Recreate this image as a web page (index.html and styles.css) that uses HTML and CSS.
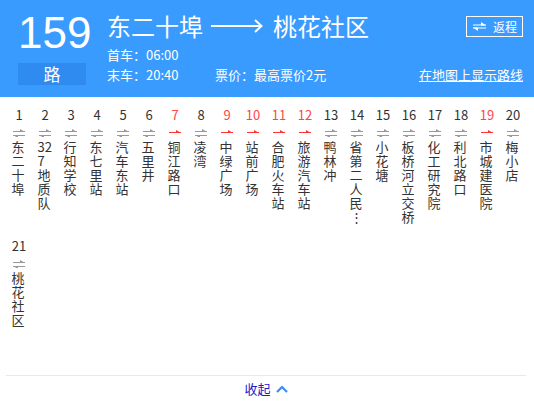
FILE: index.html
```html
<!DOCTYPE html>
<html lang="zh">
<head>
<meta charset="utf-8">
<link rel="stylesheet" href="styles.css">
</head>
<body>
<div class="header">
  <div class="route-no">
    <div class="num">159</div>
    <div class="lu">路</div>
  </div>
  <div class="info">
    <div class="title-row">
      <span class="title">东二十埠</span>
      <svg class="big-arrow" width="52" height="14" viewBox="0 0 52 14"><path d="M0 7H50M44 1L50.5 7L44 13" fill="none" stroke="#fff" stroke-width="2"/></svg>
      <span class="title">桃花社区</span>
      <div class="return-btn">
        <svg width="13" height="9" viewBox="0 0 13 9"><path d="M0 3H13M0 6H13" stroke="#fff" stroke-width="1"/><polygon points="8,0 13,3.5 8,3.5" fill="#fff"/><polygon points="0,5.5 5,5.5 5,9" fill="#fff"/></svg>
        <span>返程</span>
      </div>
    </div>
    <div class="line">首车<span class="colon">：</span>06:00</div>
    <div class="line line-row">
      <span class="last">末车<span class="colon">：</span>20:40</span>
      <span>票价<span class="colon">：</span>最高票价2元</span>
      <span class="map-link">在地图上显示路线</span>
    </div>
  </div>
</div>

<div class="stations">
  <div class="st"><div class="no">1</div><svg class="ic" width="12" height="8" viewBox="0 0 12 8"><path d="M0 2.5H12M0 6.5H12" stroke="#999"/><polygon points="7,0 12,3 7,3" fill="#999"/><polygon points="0,6 5,6 5,9" fill="#999"/></svg><div class="name">东二十埠</div></div>
  <div class="st"><div class="no">2</div><svg class="ic" width="12" height="8" viewBox="0 0 12 8"><path d="M0 2.5H12M0 6.5H12" stroke="#999"/><polygon points="7,0 12,3 7,3" fill="#999"/><polygon points="0,6 5,6 5,9" fill="#999"/></svg><div class="name">327地质队</div></div>
  <div class="st"><div class="no">3</div><svg class="ic" width="12" height="8" viewBox="0 0 12 8"><path d="M0 2.5H12M0 6.5H12" stroke="#999"/><polygon points="7,0 12,3 7,3" fill="#999"/><polygon points="0,6 5,6 5,9" fill="#999"/></svg><div class="name">行知学校</div></div>
  <div class="st"><div class="no">4</div><svg class="ic" width="12" height="8" viewBox="0 0 12 8"><path d="M0 2.5H12M0 6.5H12" stroke="#999"/><polygon points="7,0 12,3 7,3" fill="#999"/><polygon points="0,6 5,6 5,9" fill="#999"/></svg><div class="name">东七里站</div></div>
  <div class="st"><div class="no">5</div><svg class="ic" width="12" height="8" viewBox="0 0 12 8"><path d="M0 2.5H12M0 6.5H12" stroke="#999"/><polygon points="7,0 12,3 7,3" fill="#999"/><polygon points="0,6 5,6 5,9" fill="#999"/></svg><div class="name">汽车东站</div></div>
  <div class="st"><div class="no">6</div><svg class="ic" width="12" height="8" viewBox="0 0 12 8"><path d="M0 2.5H12M0 6.5H12" stroke="#999"/><polygon points="7,0 12,3 7,3" fill="#999"/><polygon points="0,6 5,6 5,9" fill="#999"/></svg><div class="name">五里井</div></div>
  <div class="st red"><div class="no">7</div><svg class="ic" width="12" height="8" viewBox="0 0 12 8"><path d="M0 3.5H12" stroke="#f33"/><polygon points="7,1 12,4 7,4" fill="#f33"/></svg><div class="name">铜江路口</div></div>
  <div class="st"><div class="no">8</div><svg class="ic" width="12" height="8" viewBox="0 0 12 8"><path d="M0 2.5H12M0 6.5H12" stroke="#999"/><polygon points="7,0 12,3 7,3" fill="#999"/><polygon points="0,6 5,6 5,9" fill="#999"/></svg><div class="name">凌湾</div></div>
  <div class="st red"><div class="no">9</div><svg class="ic" width="12" height="8" viewBox="0 0 12 8"><path d="M0 3.5H12" stroke="#f33"/><polygon points="7,1 12,4 7,4" fill="#f33"/></svg><div class="name">中绿广场</div></div>
  <div class="st red"><div class="no">10</div><svg class="ic" width="12" height="8" viewBox="0 0 12 8"><path d="M0 3.5H12" stroke="#f33"/><polygon points="7,1 12,4 7,4" fill="#f33"/></svg><div class="name">站前广场</div></div>
  <div class="st red"><div class="no">11</div><svg class="ic" width="12" height="8" viewBox="0 0 12 8"><path d="M0 3.5H12" stroke="#f33"/><polygon points="7,1 12,4 7,4" fill="#f33"/></svg><div class="name">合肥火车站</div></div>
  <div class="st red"><div class="no">12</div><svg class="ic" width="12" height="8" viewBox="0 0 12 8"><path d="M0 3.5H12" stroke="#f33"/><polygon points="7,1 12,4 7,4" fill="#f33"/></svg><div class="name">旅游汽车站</div></div>
  <div class="st"><div class="no">13</div><svg class="ic" width="12" height="8" viewBox="0 0 12 8"><path d="M0 2.5H12M0 6.5H12" stroke="#999"/><polygon points="7,0 12,3 7,3" fill="#999"/><polygon points="0,6 5,6 5,9" fill="#999"/></svg><div class="name">鸭林冲</div></div>
  <div class="st"><div class="no">14</div><svg class="ic" width="12" height="8" viewBox="0 0 12 8"><path d="M0 2.5H12M0 6.5H12" stroke="#999"/><polygon points="7,0 12,3 7,3" fill="#999"/><polygon points="0,6 5,6 5,9" fill="#999"/></svg><div class="name">省第二人民⋮</div></div>
  <div class="st"><div class="no">15</div><svg class="ic" width="12" height="8" viewBox="0 0 12 8"><path d="M0 2.5H12M0 6.5H12" stroke="#999"/><polygon points="7,0 12,3 7,3" fill="#999"/><polygon points="0,6 5,6 5,9" fill="#999"/></svg><div class="name">小花塘</div></div>
  <div class="st"><div class="no">16</div><svg class="ic" width="12" height="8" viewBox="0 0 12 8"><path d="M0 2.5H12M0 6.5H12" stroke="#999"/><polygon points="7,0 12,3 7,3" fill="#999"/><polygon points="0,6 5,6 5,9" fill="#999"/></svg><div class="name">板桥河立交桥</div></div>
  <div class="st"><div class="no">17</div><svg class="ic" width="12" height="8" viewBox="0 0 12 8"><path d="M0 2.5H12M0 6.5H12" stroke="#999"/><polygon points="7,0 12,3 7,3" fill="#999"/><polygon points="0,6 5,6 5,9" fill="#999"/></svg><div class="name">化工研究院</div></div>
  <div class="st"><div class="no">18</div><svg class="ic" width="12" height="8" viewBox="0 0 12 8"><path d="M0 2.5H12M0 6.5H12" stroke="#999"/><polygon points="7,0 12,3 7,3" fill="#999"/><polygon points="0,6 5,6 5,9" fill="#999"/></svg><div class="name">利北路口</div></div>
  <div class="st red"><div class="no">19</div><svg class="ic" width="12" height="8" viewBox="0 0 12 8"><path d="M0 3.5H12" stroke="#f33"/><polygon points="7,1 12,4 7,4" fill="#f33"/></svg><div class="name">市城建医院</div></div>
  <div class="st"><div class="no">20</div><svg class="ic" width="12" height="8" viewBox="0 0 12 8"><path d="M0 2.5H12M0 6.5H12" stroke="#999"/><polygon points="7,0 12,3 7,3" fill="#999"/><polygon points="0,6 5,6 5,9" fill="#999"/></svg><div class="name">梅小店</div></div>
  <div class="st"><div class="no">21</div><svg class="ic" width="12" height="8" viewBox="0 0 12 8"><path d="M0 2.5H12M0 6.5H12" stroke="#999"/><polygon points="7,0 12,3 7,3" fill="#999"/><polygon points="0,6 5,6 5,9" fill="#999"/></svg><div class="name">桃花社区</div></div>
</div>

<div class="footer">
  <span class="collapse">收起</span>
  <svg class="chev" width="12" height="8" viewBox="0 0 12 8"><path d="M1 7L6 2L11 7" fill="none" stroke="#3b8cf5" stroke-width="2.2"/></svg>
</div>
</body>
</html>
```

FILE: styles.css
```css
html, body {
  margin: 0;
  padding: 0;
  background: #fff;
}
body {
  width: 534px;
  height: 401px;
  overflow: hidden;
  font-family: "Noto Sans CJK SC", "Liberation Sans", sans-serif;
  color: #333;
}
.header {
  box-sizing: border-box;
  height: 97px;
  background: #3a9bff;
  color: #fff;
  display: flex;
  padding: 0 11px 0 18px;
}
.route-no {
  width: 68px;
  display: flex;
  flex-direction: column;
}
.num {
  margin-top: 11px;
  font-family: "Liberation Sans", sans-serif;
  font-size: 44px;
  line-height: 44px;
  white-space: nowrap;
}
.lu {
  margin-top: 8px;
  height: 22px;
  line-height: 22px;
  background: #2f8bf0;
  text-align: center;
  font-size: 17px;
}
.info {
  flex: 1;
  margin-left: 21px;
  display: flex;
  flex-direction: column;
}
.title-row {
  margin-top: 14px;
  height: 24px;
  display: flex;
  align-items: center;
}
.title {
  font-size: 24px;
  line-height: 24px;
}
.big-arrow {
  display: block;
  margin: 0 10px 0 8px;
}
.return-btn {
  margin-left: auto;
  box-sizing: border-box;
  width: 57px;
  height: 21px;
  border: 1px solid #fff;
  display: flex;
  align-items: center;
  padding-left: 6px;
  gap: 7px;
  font-size: 12px;
  line-height: 19px;
}
.return-btn svg {
  display: block;
}
.line {
  font-size: 13px;
  line-height: 20px;
}
.colon {
  font-family: "Noto Sans CJK JP", "Noto Sans CJK SC", sans-serif;
}
.title-row + .line {
  margin-top: 7px;
}
.line-row {
  display: flex;
}
.last {
  width: 108px;
}
.map-link {
  margin-left: auto;
  text-decoration: underline;
}
.stations {
  box-sizing: border-box;
  min-height: 278px;
  padding: 0 8px 0 6px;
  display: flex;
  flex-wrap: wrap;
  align-content: flex-start;
}
.st {
  width: 26px;
  padding: 10px 0 4px;
  text-align: center;
  font-size: 13px;
}
.no {
  line-height: 16px;
  height: 16px;
}
.red .no {
  color: #f44;
}
.ic {
  display: block;
  margin: 6px auto 0;
}
.name {
  width: 15px;
  margin: 3px auto 0;
  text-align: left;
  line-height: 14px;
  word-break: break-all;
}
.footer {
  margin: 0 8px 0 6px;
  border-top: 1px solid #e8e8e8;
  height: 25px;
  display: flex;
  align-items: center;
  justify-content: center;
  gap: 5px;
}
.collapse {
  font-size: 13px;
  color: #1a1acc;
  line-height: 16px;
}
.chev {
  display: block;
}
```
